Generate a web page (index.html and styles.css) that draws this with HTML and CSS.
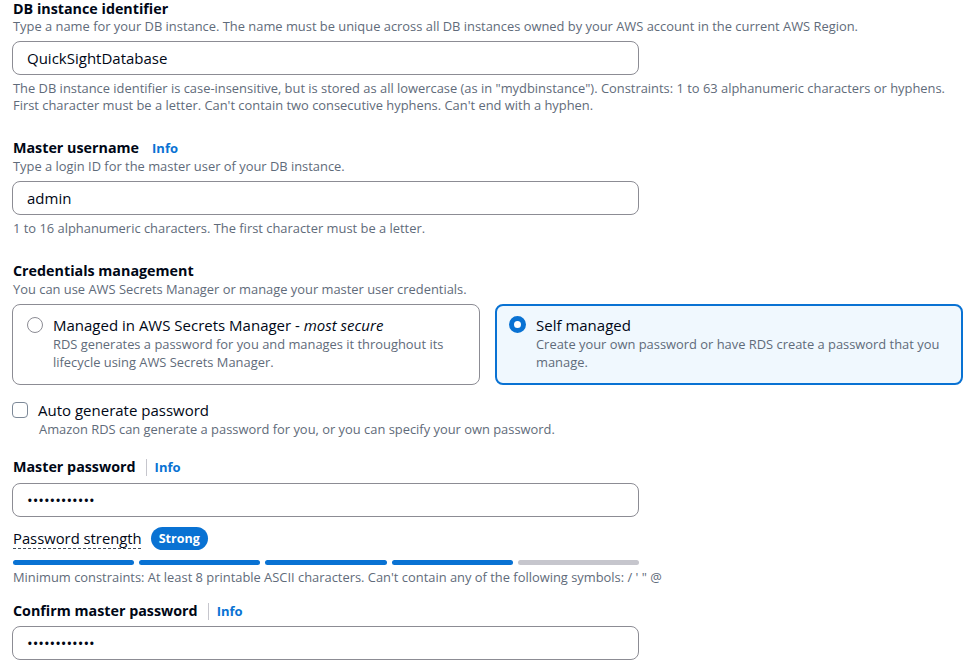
FILE: index.html
```html
<!DOCTYPE html>
<html>
<head>
<meta charset="utf-8">
<link rel="stylesheet" href="styles.css">
</head>
<body>
<div class="page">
  <section class="field first">
    <div class="label">DB instance identifier</div>
    <div class="desc">Type a name for your DB instance. The name must be unique across all DB instances owned by your AWS account in the current AWS Region.</div>
    <div class="input">QuickSightDatabase</div>
    <div class="hint">The DB instance identifier is case-insensitive, but is stored as all lowercase (as in "mydbinstance"). Constraints: 1 to 63 alphanumeric characters or hyphens.<br>First character must be a letter. Can't contain two consecutive hyphens. Can't end with a hyphen.</div>
  </section>

  <section class="field">
    <div class="label">Master username <span class="info">Info</span></div>
    <div class="desc">Type a login ID for the master user of your DB instance.</div>
    <div class="input">admin</div>
    <div class="hint">1 to 16 alphanumeric characters. The first character must be a letter.</div>
  </section>

  <section class="field">
    <div class="label">Credentials management</div>
    <div class="desc">You can use AWS Secrets Manager or manage your master user credentials.</div>
    <div class="tiles">
      <div class="tile">
        <span class="radio"></span>
        <div class="tile-body">
          <div class="tile-title">Managed in AWS Secrets Manager - <em>most secure</em></div>
          <div class="tile-desc">RDS generates a password for you and manages it throughout its lifecycle using AWS Secrets Manager.</div>
        </div>
      </div>
      <div class="tile selected">
        <span class="radio checked"></span>
        <div class="tile-body">
          <div class="tile-title">Self managed</div>
          <div class="tile-desc">Create your own password or have RDS create a password that you manage.</div>
        </div>
      </div>
    </div>
  </section>

  <section class="check-row">
    <span class="checkbox"></span>
    <div>
      <div class="check-label">Auto generate password</div>
      <div class="desc">Amazon RDS can generate a password for you, or you can specify your own password.</div>
    </div>
  </section>

  <section class="pw-field">
    <div class="label">Master password <span class="divider"></span><span class="info">Info</span></div>
    <div class="input pw">••••••••••••</div>
    <div class="strength">
      <span class="strength-label">Password strength</span>
      <span class="badge">Strong</span>
    </div>
    <div class="bars">
      <span class="bar on"></span><span class="bar on"></span><span class="bar on"></span><span class="bar on"></span><span class="bar"></span>
    </div>
    <div class="hint tight">Minimum constraints: At least 8 printable ASCII characters. Can't contain any of the following symbols: / ' " @</div>
  </section>

  <section class="pw-field confirm">
    <div class="label">Confirm master password <span class="divider"></span><span class="info">Info</span></div>
    <div class="input pw">••••••••••••</div>
  </section>
</div>
</body>
</html>
```

FILE: styles.css
```css
* { box-sizing: border-box; }
html, body { margin: 0; padding: 0; background: #ffffff; }
body {
  font-family: "Open Sans", "Noto Sans", sans-serif;
  color: #000716;
  font-size: 13px;
  line-height: 17px;
}
.page {
  padding: 0 7px 0 12px;
  width: 970px;
}
.field { margin-bottom: 24px; }
.field.first .label { height: 18px; line-height: 18px; }
.label {
  font-weight: 700;
  font-size: 14.3px;
  line-height: 20px;
  height: 20px;
  display: flex;
  align-items: center;
  padding-left: 1px;
}
.info {
  color: #0972d3;
  font-size: 13px;
  font-weight: 700;
  margin-left: 13px;
}
.divider {
  display: inline-block;
  width: 1px;
  height: 17px;
  background: #c6c6cd;
  margin-left: 10px;
}
.divider + .info { margin-left: 8px; }
.desc {
  color: #5f6b7a;
  font-size: 12.9px;
  line-height: 17px;
  padding-left: 1px;
}
.input {
  margin-top: 6px;
  width: 627px;
  height: 34px;
  border: 1px solid #8c8c94;
  border-radius: 8px;
  padding: 0 14px;
  display: flex;
  align-items: center;
  font-size: 15px;
  color: #000716;
}
.input.pw { font-size: 15px; letter-spacing: 0; }
.hint {
  color: #5f6b7a;
  font-size: 12.9px;
  line-height: 17px;
  margin-top: 5px;
  padding-left: 1px;
}
.tiles {
  display: grid;
  grid-template-columns: 468px 468px;
  column-gap: 15px;
  margin-top: 6px;
}
.tile {
  border: 1px solid #8c8c94;
  border-radius: 8px;
  height: 81px;
  display: flex;
  padding: 10px 14px;
  gap: 10px;
}
.tile.selected {
  border: 2px solid #0972d3;
  background: #f0f8fe;
  padding: 9px 12px;
}
.radio {
  flex: none;
  width: 16px;
  height: 16px;
  border-radius: 50%;
  border: 1.5px solid #8c8c94;
  background: #fff;
  margin-top: 2px;
}
.radio.checked {
  width: 17px;
  height: 17px;
  border: 5px solid #0972d3;
  margin-top: 1px;
}
.tile-title { font-size: 15px; line-height: 20px; }
.tile-desc { color: #5f6b7a; font-size: 12.9px; line-height: 18px; margin-top: 0; }
.check-row {
  display: flex;
  gap: 10px;
  margin-top: -9px;
  margin-bottom: 19px;
}
.check-row .desc { margin-top: 1px; }
.checkbox {
  flex: none;
  width: 16px;
  height: 16px;
  border: 1.5px solid #7d8998;
  border-radius: 4px;
  margin-top: 2px;
}
.check-label { font-size: 15px; line-height: 20px; }
.strength {
  display: flex;
  align-items: center;
  gap: 9px;
  padding-left: 1px;
  margin-top: 10px;
  height: 23px;
}
.strength-label {
  font-size: 14.8px;
  line-height: 18px;
  background-image: linear-gradient(to right, #414d5c 60%, transparent 60%);
  background-size: 5px 1px;
  background-repeat: repeat-x;
  background-position: left bottom;
  padding-bottom: 2px;
}
.badge {
  background: #0972d3;
  color: #fff;
  font-weight: 700;
  font-size: 12.5px;
  border-radius: 12px;
  height: 23px;
  padding: 0 8px;
  display: flex;
  align-items: center;
}
.bars {
  display: flex;
  gap: 5px;
  width: 627px;
  margin-top: 10px;
  padding-left: 1px;
}
.bar {
  flex: 1;
  height: 5px;
  border-radius: 3px;
  background: #c6c6cd;
}
.bar.on { background: #0972d3; }
.hint.tight { margin-top: 4px; }
.pw-field.confirm { margin-top: 15px; }
.pw-field.confirm .input { margin-top: 5px; }
```
